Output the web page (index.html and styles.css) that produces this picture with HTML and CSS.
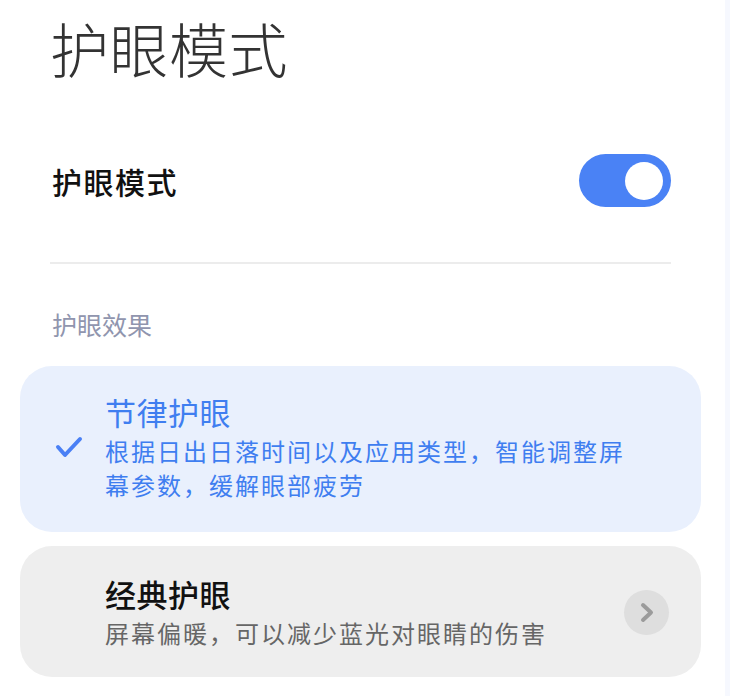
FILE: index.html
```html
<!DOCTYPE html>
<html lang="zh-CN">
<head>
  <meta charset="UTF-8">
  <meta name="viewport" content="width=device-width, initial-scale=1.0">
  <title>护眼模式</title>
  <link rel="stylesheet" href="styles.css">
</head>
<body>
  <div class="page">
    <h1 class="page-title">护眼模式</h1>

    <div class="switch-row">
      <span class="switch-label">护眼模式</span>
      <div class="switch on"><span class="knob"></span></div>
    </div>

    <div class="divider"></div>

    <div class="section-label">护眼效果</div>

    <div class="options">
      <div class="option selected">
        <div class="option-mark">
          <svg width="28" height="22" viewBox="0 0 28 22">
            <polyline points="3,11 10,19 25,3" fill="none" stroke="#4a80f5" stroke-width="4" stroke-linecap="round" stroke-linejoin="round"/>
          </svg>
        </div>
        <div class="option-text">
          <div class="option-title">节律护眼</div>
          <div class="option-desc">根据日出日落时间以及应用类型，智能调整屏幕参数，缓解眼部疲劳</div>
        </div>
      </div>

      <div class="option">
        <div class="option-mark"></div>
        <div class="option-text">
          <div class="option-title">经典护眼</div>
          <div class="option-desc">屏幕偏暖，可以减少蓝光对眼睛的伤害</div>
        </div>
        <div class="option-more">
          <svg width="45" height="45" viewBox="0 0 45 45">
            <polyline points="19,15 27,22.5 19,30" fill="none" stroke="#9b9b9b" stroke-width="4" stroke-linecap="round" stroke-linejoin="round"/>
          </svg>
        </div>
      </div>
    </div>
  </div>
</body>
</html>
```

FILE: styles.css
```css
body {
  margin: 0;
  min-height: 696px;
  background: linear-gradient(to right, #fff 725px, #f6f8fe 725px);
  font-family: "Noto Sans CJK SC", "Noto Sans", sans-serif;
}
.page {
  padding: 14px 59px 0 50px;
}
.page-title {
  margin: 0;
  font-size: 59px;
  line-height: 68px;
  font-weight: 300;
  letter-spacing: 0.5px;
  color: #333;
}
.switch-row {
  display: flex;
  align-items: center;
  justify-content: space-between;
  margin-top: 72px;
  height: 53px;
}
.switch-label {
  font-size: 30px;
  font-weight: 500;
  color: #111;
  letter-spacing: 1.5px;
  padding-left: 2px;
}
.switch {
  width: 92px;
  height: 53px;
  border-radius: 27px;
  background: #4a82f5;
  display: flex;
  align-items: center;
  justify-content: flex-end;
  padding: 0 8px;
  box-sizing: border-box;
}
.knob {
  width: 38px;
  height: 38px;
  border-radius: 50%;
  background: #fff;
}
.divider {
  margin-top: 55px;
  height: 2px;
  background: #ececec;
}
.section-label {
  margin-top: 43px;
  padding-left: 2px;
  font-size: 25px;
  line-height: 34px;
  color: #9095ae;
}
.options {
  margin: 25px -30px 0 -30px;
  display: flex;
  flex-direction: column;
  gap: 14px;
}
.option {
  display: flex;
  align-items: center;
  border-radius: 32px;
  background: #eeeeee;
  padding: 28px 32px 27px 35px;
}
.option.selected {
  background: #e9f0fd;
  padding-top: 26px;
  padding-bottom: 30px;
  padding-right: 60px;
}
.option-mark {
  width: 28px;
  flex-shrink: 0;
  display: flex;
}
.option-text {
  flex: 1;
  margin-left: 22px;
}
.option-title {
  font-size: 31px;
  line-height: 40px;
  font-weight: 500;
  letter-spacing: 0.5px;
  color: #111;
}
.option-desc {
  font-size: 24px;
  line-height: 34px;
  letter-spacing: 2px;
  color: #666;
  margin-top: 2px;
}
.option.selected .option-title,
.option.selected .option-desc {
  color: #3f7ef0;
}
.option.selected .option-title {
  font-weight: 400;
}
.option-more {
  width: 45px;
  height: 45px;
  border-radius: 50%;
  background: #dedede;
  flex-shrink: 0;
}
```
